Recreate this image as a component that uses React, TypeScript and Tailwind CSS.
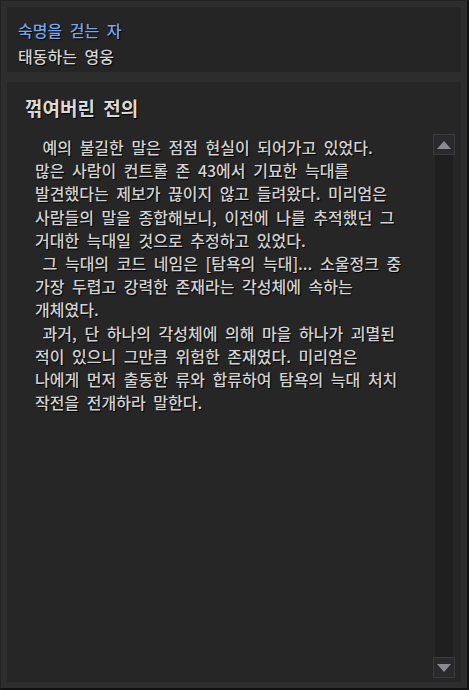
import React from "react";

const lines = [
  " 예의 불길한 말은 점점 현실이 되어가고 있었다.",
  "많은 사람이 컨트롤 존 43에서 기묘한 늑대를",
  "발견했다는 제보가 끊이지 않고 들려왔다. 미리엄은",
  "사람들의 말을 종합해보니, 이전에 나를 추적했던 그",
  "거대한 늑대일 것으로 추정하고 있었다.",
  " 그 늑대의 코드 네임은 [탐욕의 늑대]... 소울정크 중",
  "가장 두렵고 강력한 존재라는 각성체에 속하는",
  "개체였다.",
  " 과거, 단 하나의 각성체에 의해 마을 하나가 괴멸된",
  "적이 있으니 그만큼 위험한 존재였다. 미리엄은",
  "나에게 먼저 출동한 류와 합류하여 탐욕의 늑대 처치",
  "작전을 전개하라 말한다.",
];

const ScrollButton: React.FC<{ down?: boolean }> = ({ down }) => (
  <div className="w-[22px] h-[21px] shrink-0 bg-[#2a2a2c] border border-[#3a3a3c] flex items-center justify-center">
    <svg width="16" height="10" viewBox="0 0 16 10">
      <polygon
        points={down ? "1,1 15,1 8,9" : "8,1 15,9 1,9"}
        fill="#8b8a90"
      />
    </svg>
  </div>
);

export default function App() {
  return (
    <div
      className="w-[469px] h-[690px] bg-[#2d2d2d] border-l-[1px] border-t-[1px] border-[#222] border-r-[2px] border-r-[#111] border-b-[2px] border-b-[#111] p-[6px] flex flex-col gap-[10px] [text-shadow:1px_1px_1px_#000] [word-spacing:4px]"
      style={{ fontFamily: '"Noto Sans CJK KR", "Noto Sans", sans-serif' }}
    >
      <div className="h-[65px] bg-[#252525] px-[11px] pt-[10px] flex flex-col">
        <div className="text-[16px] leading-[26px] text-[#75a7ea] font-medium">숙명을 걷는 자</div>
        <div className="text-[16px] leading-[26px] text-[#d4d4d4] font-medium">태동하는 영웅</div>
      </div>
      <div className="flex-1 bg-[#262626] flex flex-col pl-[18px] pr-[5px] pb-[4px]">
        <div className="h-[48px] flex items-center pt-[4px]">
          <span className="text-[19px] font-bold text-[#dadada]">꺾여버린 전의</span>
        </div>
        <div className="flex-1 flex">
          <div className="flex-1 pl-[10px] pt-[6px]">
            {lines.map((l, i) => (
              <div
                key={i}
                className="text-[16px] leading-[23.2px] text-[#d2d2d2] font-medium whitespace-pre"
              >
                {l}
              </div>
            ))}
          </div>
          <div className="w-[22px] flex flex-col mr-[1px] mt-[4px]">
            <ScrollButton />
            <div className="flex-1 mx-[2px] bg-[#1f1f20]" />
            <ScrollButton down />
          </div>
        </div>
      </div>
    </div>
  );
}
